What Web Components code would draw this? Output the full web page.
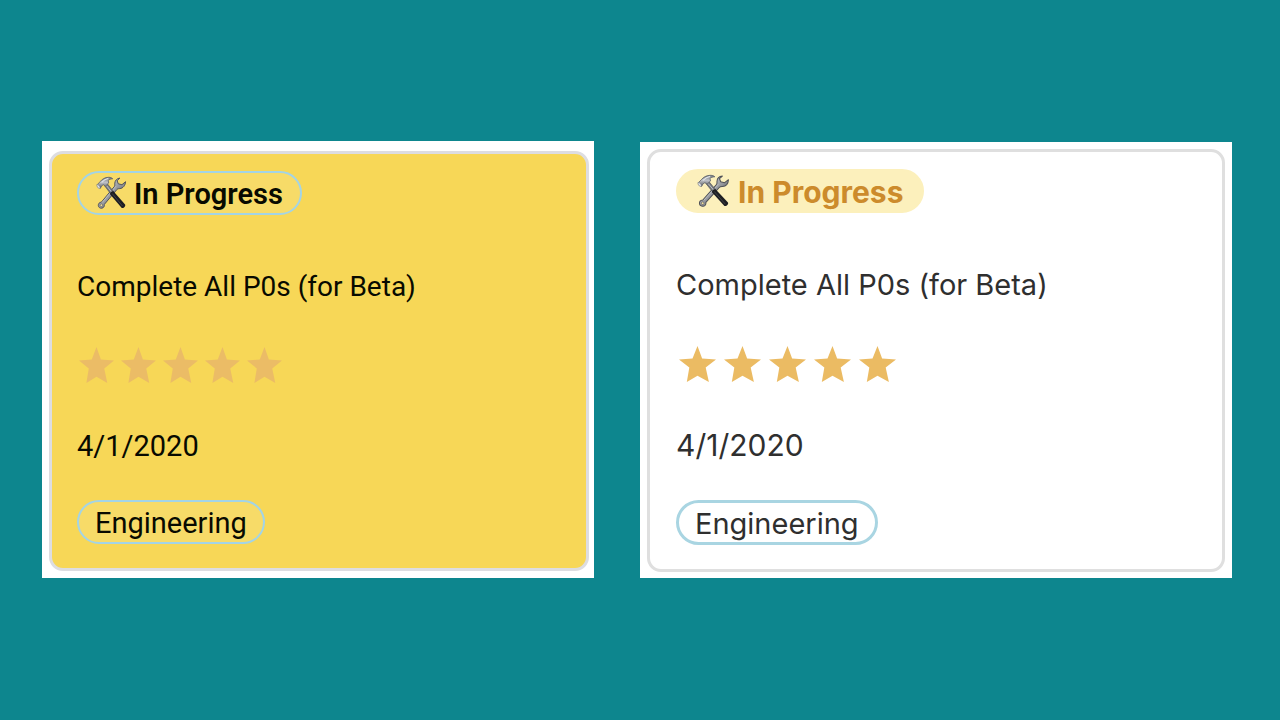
<!DOCTYPE html>
<html lang="en">
<head>
<meta charset="utf-8">
<title>Task cards</title>
<style>
  html, body { margin: 0; }
  body { background: #0d868e; font-family: Inter, "Liberation Sans", sans-serif; }
</style>
</head>
<body>
<compare-board>
  <task-card class="highlight" rating="5">
    <status-pill slot="status">In Progress</status-pill>
    <span slot="title">Complete All P0s (for Beta)</span>
    <time slot="date" datetime="2020-04-01">4/1/2020</time>
    <tag-pill slot="tag">Engineering</tag-pill>
  </task-card>
  <task-card class="plain" rating="5">
    <status-pill slot="status">In Progress</status-pill>
    <span slot="title">Complete All P0s (for Beta)</span>
    <time slot="date" datetime="2020-04-01">4/1/2020</time>
    <tag-pill slot="tag">Engineering</tag-pill>
  </task-card>
</compare-board>

<template id="board">
  <style>
    :host {
      display: grid;
      grid-template-columns: 552fr 592fr;
      column-gap: 46px;
      align-content: center;
      align-items: end;
      box-sizing: border-box;
      min-height: 100vh;
      padding: 0 48px 1px 42px;
    }
    ::slotted(.highlight) {
      --family: Roboto, Inter, sans-serif;
      --frame: 10px 5px 7px 7px;
      --edge: #dddde1;
      --surface: #f7d757;
      --inset: 17px 25px 24px;
      --text: #080a00;
      --size: 29px;
      --title-size: 28px;
      --gap-title: 54px;
      --gap-stars: 42px;
      --gap-date: 45px;
      --gap-tag: 36px;
      --star-width: 35px;
      --star-gap: 7px;
      --star-inset: 2px;
      --star: #ebbc66;
      --status-fill: #f7db68;
      --status-edge: #a3d4e6;
      --status-text: #080a00;
      --status-weight: 600;
      --status-pad: 17px;
      --tag-fill: #f7db68;
      --tag-border: 2px solid #a3d4e6;
      --tag-pad: 16px;
      --tag-height: 44px;
      --icon-width: 31px;
      --icon-gap: 7px;
    }
    ::slotted(.plain) {
      --family: Inter, sans-serif;
      --frame: 7px 7px 6px 7px;
      --edge: #dfdfdf;
      --surface: #ffffff;
      --inset: 17px 26px 24px;
      --text: #2f2f2f;
      --size: 30px;
      --title-size: 29px;
      --gap-title: 54px;
      --gap-stars: 43px;
      --gap-date: 45px;
      --gap-tag: 37px;
      --star-width: 37px;
      --star-gap: 8px;
      --star-inset: 3px;
      --star: #ebbb63;
      --status-fill: #fcf0bc;
      --status-edge: #fcf0bc;
      --status-text: #cc8b2c;
      --status-weight: 700;
      --status-pad: 19px;
      --tag-fill: #ffffff;
      --tag-border: 3px solid #a9d5e2;
      --tag-size: 29px;
      --tag-pad: 16px;
      --tag-height: 45px;
      --icon-width: 33px;
      --icon-gap: 8px;
    }
  </style>
  <slot></slot>
</template>

<template id="card">
  <style>
    :host { display: block; background: #fff; padding: var(--frame); font-family: var(--family); }
    article {
      display: flex;
      flex-direction: column;
      align-items: flex-start;
      border: 3px solid var(--edge);
      border-radius: 14px;
      background: var(--surface);
      color: var(--text);
      font-size: var(--size);
      line-height: 36px;
      padding: var(--inset);
    }
    h2 { margin: var(--gap-title) 0 0; font: inherit; font-size: var(--title-size); white-space: nowrap; }
    star-rating { margin: var(--gap-stars) 0 0 var(--star-inset); }
    p { margin: var(--gap-date) 0 var(--gap-tag); }
  </style>
  <article>
    <slot name="status"></slot>
    <h2><slot name="title"></slot></h2>
    <star-rating></star-rating>
    <p><slot name="date"></slot></p>
    <slot name="tag"></slot>
  </article>
</template>

<template id="stars">
  <style>
    :host { display: flex; gap: var(--star-gap); }
    svg { display: block; width: var(--star-width); height: 36px; fill: var(--star); }
  </style>
</template>

<template id="status">
  <style>
    :host {
      display: flex;
      align-items: center;
      gap: var(--icon-gap);
      box-sizing: border-box;
      height: 44px;
      padding: 0 var(--status-pad);
      border: 2px solid var(--status-edge);
      border-radius: 22px;
      background: var(--status-fill);
      color: var(--status-text);
      font-weight: var(--status-weight);
      white-space: nowrap;
    }
    svg { display: block; flex: none; width: var(--icon-width); height: 34px; }
    span { padding-top: 2px; }
  </style>
  <svg viewBox="0 0 32 34" preserveAspectRatio="none" aria-hidden="true">
    <defs>
      <linearGradient id="steel" x1="0" y1="0" x2="1" y2="1">
        <stop offset="0" stop-color="#7f8288"/><stop offset=".35" stop-color="#b4b7bd"/>
        <stop offset=".6" stop-color="#85878d"/><stop offset="1" stop-color="#55575c"/>
      </linearGradient>
      <linearGradient id="head" x1="0" y1="0" x2="0" y2="1">
        <stop offset="0" stop-color="#73777e"/><stop offset=".45" stop-color="#bfc2c8"/>
        <stop offset="1" stop-color="#5a5c62"/>
      </linearGradient>
    </defs>
    <path d="M24.6 2.1c-3 .3-5 2.4-5.2 5.1-.1 1.5.2 2.4-.5 3.4L5.6 26.1c-2 .2-3.4 1.5-3.2 3.5.2 1.8 1.8 2.9 3.6 2.6 2-.3 2.8-1.8 2.6-3.8l13-14.9c.8-.8 1.6-.8 3-.9 3.3-.3 5.7-3.1 5.9-6.9l-3.7 3-3.8-.9-1.2-3.1z" fill="url(#steel)" stroke="#505258" stroke-width="1" stroke-linejoin="round"/>
    <path d="M20.6 10.2 6.5 26.3" stroke="#c4c6ca" stroke-width=".8" fill="none"/>
    <circle cx="5.5" cy="29.2" r="1.3" fill="#f4e2a1" stroke="#55575c" stroke-width=".6"/>
    <path d="m8.8 9.7 2.7-2.2 6.8 8.4-2.8 2.4z" fill="#74777d" stroke="#484b51" stroke-width=".6"/>
    <path d="m10.6 9.3 6 7.3" stroke="#cfd1d5" stroke-width=".8" fill="none"/>
    <path d="M14.5 18.3c-.2-1.8 1.8-3.6 3.5-3L30 28.6c.9 1.5-1.4 4.1-3.4 3.4z" fill="#1d1e22"/>
    <path d="m16.7 17.5 10.7 12.6" stroke="#494b50" stroke-width=".8" fill="none"/>
    <path d="M1.3 8.7 4 5.9C6.2 3.1 9.2 1.4 12.8 1.3c1.8 0 3.4.4 4.5 1.5-2.2.1-3.8.6-4.7 1.7l.5 2.5-3.3 3.2-2.2-1.5-2 1.3-.4 1.4-1.1 1z" fill="url(#head)" stroke="#5c6067" stroke-width=".8" stroke-linejoin="round"/>
    <path d="M1.2 8.4c.8-.5 3 1.9 3.1 3-.2 1.2-1.2 1.3-2 .5-.9-.8-1.8-2.5-1.1-3.5z" fill="#e3e6eb" stroke="#656970" stroke-width=".6"/>
    <path d="M5.8 6.4c2-2.2 4.2-3.5 7-4" stroke="#dfe2e7" stroke-width="1.1" fill="none"/>
  </svg>
  <span><slot></slot></span>
</template>

<template id="tag">
  <style>
    :host {
      display: flex;
      align-items: center;
      box-sizing: border-box;
      height: var(--tag-height);
      padding: 2px var(--tag-pad) 0;
      border: var(--tag-border);
      border-radius: 23px;
      background: var(--tag-fill);
      font-size: var(--tag-size, inherit);
      white-space: nowrap;
    }
  </style>
  <slot></slot>
</template>

<script>
  const stamp = (host, id) => {
    const root = host.attachShadow({ mode: "open" });
    root.append(document.getElementById(id).content.cloneNode(true));
    return root;
  };

  customElements.define("compare-board", class extends HTMLElement {
    constructor() { super(); stamp(this, "board"); }
  });

  customElements.define("star-rating", class extends HTMLElement {
    connectedCallback() {
      if (this.shadowRoot) return;
      const root = stamp(this, "stars");
      const count = Number(this.getAttribute("value")) || 5;
      this.setAttribute("role", "img");
      this.setAttribute("aria-label", count + " stars");
      const star = '<svg viewBox="0 0 104 104" preserveAspectRatio="none" aria-hidden="true"><path d="M52 0 65 36 104 39 75 62 84 104 52 86 22 104 29 62 0 39 38 36Z"/></svg>';
      root.append(document.createRange().createContextualFragment(star.repeat(count)));
    }
  });

  customElements.define("status-pill", class extends HTMLElement {
    constructor() { super(); stamp(this, "status"); }
  });

  customElements.define("tag-pill", class extends HTMLElement {
    constructor() { super(); stamp(this, "tag"); }
  });

  customElements.define("task-card", class extends HTMLElement {
    connectedCallback() {
      if (this.shadowRoot) return;
      const root = stamp(this, "card");
      root.querySelector("star-rating").setAttribute("value", this.getAttribute("rating"));
    }
  });
</script>
</body>
</html>
